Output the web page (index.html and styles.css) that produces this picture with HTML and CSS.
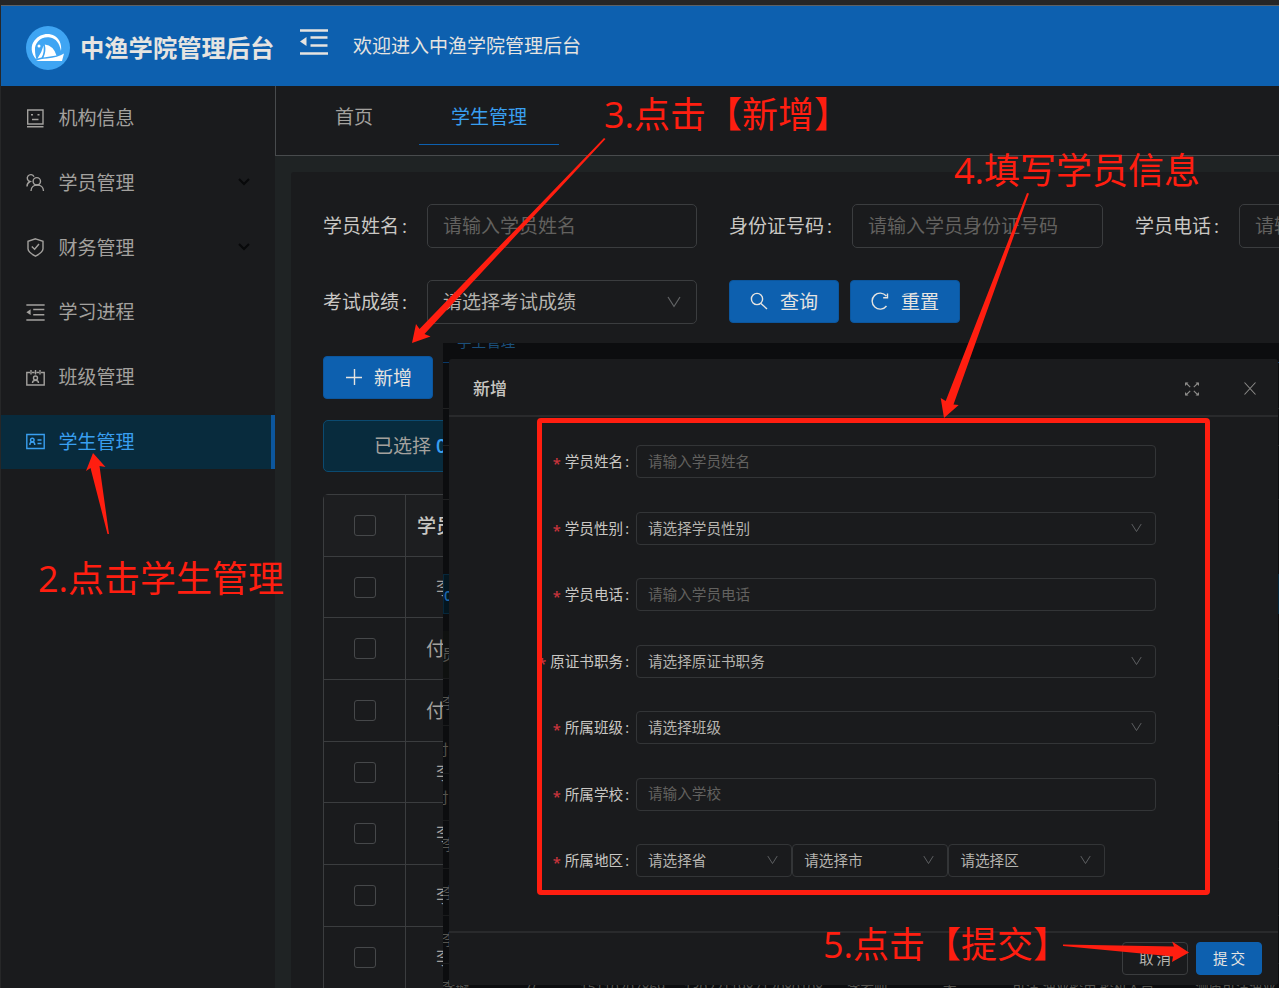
FILE: index.html
```html
<!DOCTYPE html>
<html lang="zh-CN">
<head>
    <meta charset="UTF-8">
    <meta name="viewport" content="width=device-width, initial-scale=1.0">
    <title>中渔学院管理后台</title>
    <link rel="stylesheet" href="styles.css">
</head>
<body>
    <svg class="sprite" width="0" height="0">
        <symbol id="i-down" viewBox="0 0 14 12"><path d="M1 1l6 9.5L13 1" fill="none" stroke="currentColor" stroke-width="1.2"/></symbol>
        <symbol id="i-indent" viewBox="0 0 28 26"><path d="M0 1.5h28M10.5 8.5h17M10.5 16.5h17M0 24.500h28" fill="none" stroke="currentColor" stroke-width="2.3"/><path d="M0 12.5L6.500 8v9z" fill="currentColor" stroke="none"/></symbol>
    </svg>

    <header class="header">
        <div class="logo">
            <svg width="44" height="44" viewBox="0 0 44 44">
                <circle cx="22" cy="22" r="22" fill="#3fa5f3"/>
                <path d="M10.500 33.500C4.500 28 4.500 19 8.500 14.500C16 5 29 6.500 33.500 15C35 18 35.500 22 35 25C33.500 17 30 12.500 24 11.500C15 10 8.500 17 9 24C9 28 9.800 31 10.500 33.500z" fill="#fff"/>
                <path d="M11.500 32.500Q16 26 17.500 19.500Q18.500 27 15.500 31.500z" fill="#fff"/>
                <path d="M17.500 31.500Q20.500 25 18.800 18.500Q27.500 19.500 30.500 29.500z" fill="#fff"/>
                <path d="M10 35Q14 32.600 21 32.400Q32 31.500 38 27.500L36 35z" fill="#fff"/>
                <circle cx="13" cy="20" r="1.500" fill="#fff"/>
            </svg>
            <h1>中渔学院管理后台</h1>
        </div>
        <svg class="fold" width="28" height="26"><use href="#i-indent"/></svg>
        <span class="welcome">欢迎进入中渔学院管理后台</span>
    </header>

    <div class="layout">
        <nav class="sidebar">
            <a class="menu-item">
                <svg width="19" height="19" viewBox="0 0 19 19"><path d="M1.700 1h15.300v14H1.700zM1 17.800h16.500M5 5.800h2M11.500 5.800h2M6 10.500h6.500"/></svg>
                机构信息
            </a>
            <a class="menu-item">
                <svg width="19" height="19" viewBox="0 0 19 19"><circle cx="10.800" cy="8.300" r="3.700"/><path d="M5 18c0-8 12.500-8 12.500 0M8 3.700A3.500 3.500 0 1 0 4 8.500C2 9.500 1 11 1 13.500"/></svg>
                学员管理
                <svg class="arrow" width="12" height="8" viewBox="0 0 12 8"><path d="M1 1l5 5 5-5"/></svg>
            </a>
            <a class="menu-item">
                <svg width="19" height="19" viewBox="0 0 19 19"><path d="M9.500 .8l7.500 2.500v7.500c0 3-4 5.500-7.500 7.400c-3.500-1.900-7.500-4.400-7.500-7.400V3.300zM5.800 8.500L8.600 11.300L13 6"/></svg>
                财务管理
                <svg class="arrow" width="12" height="8" viewBox="0 0 12 8"><path d="M1 1l5 5 5-5"/></svg>
            </a>
            <a class="menu-item">
                <svg width="19" height="17"><use href="#i-indent"/></svg>
                学习进程
            </a>
            <a class="menu-item">
                <svg width="19" height="19" viewBox="0 0 19 19"><path d="M4 4.500H.8V17h17.400V4.500H15M6 4.500h2.500M10.500 4.500H13M5 2v4.500M9.500 2v4.500M14 2v4.500M6.500 15c0-3.500 6-3.500 6 0"/><circle cx="9.500" cy="10" r="2"/></svg>
                班级管理
            </a>
            <a class="menu-item active">
                <svg width="19" height="19" viewBox="0 0 19 19"><path d="M.8 2.500h17.400v14H.8zM3.800 13c0-4 5-4 5 0M11.500 8h4M11.500 11.500h4"/><circle cx="6.300" cy="8" r="1.800"/></svg>
                学生管理
            </a>
        </nav>

        <main class="main">
            <div class="tabs">
                <a class="tab">首页</a>
                <a class="tab active">学生管理</a>
            </div>
            <section class="card">
                <div class="filters">
                    <div class="field">
                        <label>学员姓名<i>:</i></label>
                        <input class="control w-name" placeholder="请输入学员姓名">
                    </div>
                    <div class="field">
                        <label>身份证号码<i>:</i></label>
                        <input class="control w-id" placeholder="请输入学员身份证号码">
                    </div>
                    <div class="field">
                        <label>学员电话<i>:</i></label>
                        <input class="control w-name" placeholder="请输入学员电话">
                    </div>
                </div>
                <div class="filters">
                    <div class="field">
                        <label>考试成绩<i>:</i></label>
                        <div class="control select w-name">请选择考试成绩<svg width="14" height="12"><use href="#i-down"/></svg></div>
                    </div>
                    <div class="buttons">
                        <button class="btn"><svg width="18" height="18" viewBox="0 0 18 18"><circle cx="7" cy="7" r="5.600"/><path d="M11 11.500l6 5.500"/></svg>查询</button>
                        <button class="btn"><svg width="18" height="18" viewBox="0 0 18 18"><path d="M15.500 14A8 8 0 1 1 15.300 4M16.500 1.500v4.300h-4.300"/></svg>重置</button>
                    </div>
                </div>
                <button class="btn btn-add"><svg width="16" height="16" viewBox="0 0 16 16"><path d="M8.500 0v16M0 8.500h16"/></svg>新增</button>
                <div class="selected-tip">已选择 <b>0</b></div>
                <table class="students">
                    <tr><th><span class="check"></span></th><th class="name">学员姓名</th></tr>
                    <tr><td><span class="check"></span></td><td class="name short">李璇</td></tr>
                    <tr><td><span class="check"></span></td><td class="name">付老师</td></tr>
                    <tr><td><span class="check"></span></td><td class="name">付老师</td></tr>
                    <tr><td><span class="check"></span></td><td class="name short">李璇</td></tr>
                    <tr><td><span class="check"></span></td><td class="name short">李璇</td></tr>
                    <tr><td><span class="check"></span></td><td class="name short">李璇</td></tr>
                    <tr><td><span class="check"></span></td><td class="name short">李璇</td></tr>
                </table>
            </section>
        </main>
    </div>

    <div class="overlay">
        <div class="behind">
            <div class="b-tab"><span>学生管理</span></div>
            <div class="b-gap"></div>
            <div class="b-line"></div>
            <div class="b-line b-tall"></div>
            <div class="b-tip">0</div>
            <div class="b-row b-head"><span>员</span></div>
            <div class="b-row"><span>李</span></div>
            <div class="b-row"><span class="l">付</span></div>
            <div class="b-row"><span class="l">付</span></div>
            <div class="b-row"><span>李</span></div>
            <div class="b-row"><span>李</span></div>
            <div class="b-row"><span>李</span></div>
            <div class="b-row b-last">
                <span>李璇</span><span>女</span><span>15110207869</span><span>130221198712080108</span><span>李老师</span><span>无</span><span>可注,渔业船用,船机人员</span><span>测质可注渔业</span>
            </div>
        </div>
        <div class="modal">
            <div class="modal-head">
                <h2>新增</h2>
                <svg class="full" width="14" height="14" viewBox="0 0 14 14"><path d="M1 1l4.200 4.200M13 1L8.800 5.200M1 13l4.200-4.200M13 13L8.800 8.800"/><path d="M0 .5h3.500L0 4zM14 .5V4L10.500 .5zM0 13.500V10l3.500 3.500zM14 13.500h-3.500L14 10z" class="solid"/></svg>
                <svg width="12" height="13" viewBox="0 0 12 13"><path d="M.5 .5l11 12M11.500 .5l-11 12"/></svg>
            </div>
            <form class="modal-body">
                <div class="row"><label><em>*</em>学员姓名<i>:</i></label><input class="ctl" placeholder="请输入学员姓名"></div>
                <div class="row"><label><em>*</em>学员性别<i>:</i></label><div class="ctl select">请选择学员性别<svg width="11" height="10"><use href="#i-down"/></svg></div></div>
                <div class="row"><label><em>*</em>学员电话<i>:</i></label><input class="ctl" placeholder="请输入学员电话"></div>
                <div class="row"><label><em>*</em>原证书职务<i>:</i></label><div class="ctl select">请选择原证书职务<svg width="11" height="10"><use href="#i-down"/></svg></div></div>
                <div class="row"><label><em>*</em>所属班级<i>:</i></label><div class="ctl select">请选择班级<svg width="11" height="10"><use href="#i-down"/></svg></div></div>
                <div class="row"><label><em>*</em>所属学校<i>:</i></label><input class="ctl" placeholder="请输入学校"></div>
                <div class="row"><label><em>*</em>所属地区<i>:</i></label>
                    <div class="ctl select third">请选择省<svg width="11" height="10"><use href="#i-down"/></svg></div>
                    <div class="ctl select third">请选择市<svg width="11" height="10"><use href="#i-down"/></svg></div>
                    <div class="ctl select third">请选择区<svg width="11" height="10"><use href="#i-down"/></svg></div>
                </div>
            </form>
            <div class="modal-foot">
                <button class="mbtn">取消</button>
                <button class="mbtn primary">提交</button>
            </div>
        </div>
    </div>

    <!-- step annotations -->
    <div class="frame"></div>
    <svg class="arrows" width="1279" height="988" viewBox="0 0 1279 988">
        <path d="M107.500 534L90.500 468L86 471L93 453L105.500 467L99.500 466L109 534z"/>
        <path d="M604 138L419.500 329L416 324L412 343L430.500 336.500L424.500 334L605.500 139z"/>
        <path d="M1027 193L945.700 401L940.700 398L944 418L958.700 405L953.500 404.500L1029 193.500z"/>
        <path d="M1063 944.500L1174 946.500L1172 941.500L1189 952.500L1172 962L1173 956.500L1063 946z"/>
    </svg>
    <div class="note note-2">2.点击学生管理</div>
    <div class="note note-3">3.点击【新增】</div>
    <div class="note note-4">4.填写学员信息</div>
    <div class="note note-5">5.点击【提交】</div>
</body>
</html>
```

FILE: styles.css
```css
* {
    box-sizing: border-box;
}
body {
    margin: 0;
    width: 1279px;
    height: 988px;
    overflow: hidden;
    position: relative;
    background: #1a1b1d;
    border-top: 5px solid #262626;
    border-left: 1px solid #262728;
    color: #c9c7c3;
    font-family: "Open Sans", "Noto Sans CJK SC", sans-serif;
    font-size: 19px;
    font-weight: 400;
}
svg {
    display: block;
    flex: none;
    fill: none;
    stroke: currentColor;
    stroke-width: 1.4;
}
.sprite {
    position: absolute;
}
i, em {
    font-style: normal;
}
input, button {
    font: inherit;
    color: inherit;
}
input::placeholder {
    color: #62615f;
    opacity: 1;
}

/* header */
.header {
    height: 81px;
    display: flex;
    align-items: center;
    background: #0d60af;
    border-top: 1px solid #5d6266;
    color: #e6e4e1;
}
.logo {
    display: flex;
    align-items: center;
    gap: 10px;
    width: 299px;
    padding: 3px 0 0 25px;
}
.logo svg {
    stroke: none;
}
.logo h1 {
    margin: 0;
    font-size: 24.3px;
    font-weight: 700;
    line-height: 44px;
    white-space: nowrap;
}
.fold {
    margin-top: -8px;
}
.welcome {
    margin: -2px 0 0 25px;
}

.layout {
    display: flex;
    height: 902px;
}

/* sidebar */
.sidebar {
    width: 274px;
    flex: none;
    padding-top: 5px;
    color: #a3a19e;
}
.menu-item {
    height: 54px;
    margin-bottom: 10.8px;
    padding: 0 0 2px 25px;
    display: flex;
    align-items: center;
    gap: 13.5px;
}
.menu-item svg {
    margin-top: 2px;
}
.menu-item.active {
    background: #082b3d;
    border-right: 4px solid #0c569d;
    color: #399ff0;
}
.menu-item .arrow {
    margin: 0 0 0 90px;
    color: #08090a;
    stroke-width: 2;
}

/* main */
.main {
    flex: 1;
    min-width: 0;
    background: #1f2324;
}
.tabs {
    height: 70px;
    display: flex;
    background: #1a1b1d;
    border-left: 1px solid #484b4d;
    border-bottom: 1px solid #484b4d;
    padding-left: 28px;
}
.tab {
    width: 100px;
    height: 59px;
    line-height: 62px;
    text-align: center;
    color: #a3a19e;
}
.tab.active {
    width: 140px;
    margin-left: 15px;
    color: #399ff0;
    border-bottom: 1px solid #0d60af;
}
.card {
    margin: 16px 0 0 16px;
    height: 816px;
    padding: 32px 0 0 32px;
    background: #1a1b1d;
    border-radius: 3px 0 0 0;
    overflow: hidden;
}
.filters {
    display: flex;
    gap: 32px;
    height: 44px;
    margin-bottom: 32px;
}
.field {
    display: flex;
    flex: none;
    align-items: center;
}
.field label {
    margin-top: -2px;
}
.field label i {
    margin: 0 20px 0 3px;
}
.control {
    height: 44px;
    padding: 0 15px;
    background: none;
    border: 1px solid #3b3d3f;
    border-radius: 5px;
}
.w-name {
    width: 270px;
}
.w-id {
    width: 251px;
}
.select {
    display: flex;
    align-items: center;
    justify-content: space-between;
    padding-bottom: 2px;
    color: #b5b3af;
}
.select svg {
    margin-top: 1px;
    color: #626466;
}
.buttons {
    display: flex;
    gap: 11px;
}
.btn {
    width: 110px;
    height: 43px;
    padding: 0 0 2px;
    display: flex;
    align-items: center;
    justify-content: center;
    gap: 12px;
    color: #e6e4e1;
    background: #0d60af;
    border: 1px solid #0c569d;
    border-radius: 4px;
}
.btn-add {
    margin-bottom: 21px;
    padding-left: 2px;
}
.selected-tip {
    height: 52px;
    line-height: 50px;
    padding-left: 50px;
    color: #a3a19e;
    background: #082b3d;
    border: 1px solid #0b4a70;
    border-radius: 5px;
}
.selected-tip b {
    color: #399ff0;
    font-weight: 600;
}
.students {
    width: 1100px;
    margin-top: 22px;
    border: 1px solid #3b3d3f;
    border-radius: 5px 0 0 0;
    border-spacing: 0;
    table-layout: fixed;
}
.students tr {
    height: 61.7px;
}
.students th, .students td {
    padding: 0 0 1px;
    border-bottom: 1px solid #3b3d3f;
    color: #a3a19e;
}
.students th {
    background: #1d1e20;
    font-weight: 500;
    color: #c9c7c3;
}
.students th:first-child, .students td:first-child {
    width: 82px;
    padding: 0;
    border-right: 1px solid #3b3d3f;
}
.students .name {
    text-align: left;
    padding-left: 11px;
}
.students td.name {
    padding-left: 20px;
}
.students td.short {
    padding-left: 30px;
}
.check {
    display: block;
    width: 22px;
    height: 21px;
    margin: 0 auto;
    border: 1px solid #46484a;
    border-radius: 3px;
}

/* add dialog with its dimmed page */
.overlay {
    position: absolute;
    left: 442px;
    top: 338px;
    width: 836px;
    height: 645px;
    overflow: hidden;
    background: #0c0d0f;
    font-size: 14.6px;
}
.behind {
    color: #55544f;
}
.b-tab {
    height: 20px;
    overflow: hidden;
    padding-left: 14px;
    color: #1b4f7a;
    border-bottom: 1px solid #0a3866;
    line-height: 20px;
}
.b-tab span {
    display: block;
    margin-top: -12px;
}
.b-gap {
    height: 46px;
    border-bottom: 1px solid #202122;
}
.b-line {
    height: 37px;
    border-bottom: 1px solid #202122;
}
.b-tall {
    height: 54px;
    margin-bottom: 74px;
}
.b-tip {
    height: 40px;
    line-height: 40px;
    background: #04161f;
    border: 1px solid #06273b;
    color: #1c64a8;
    font-weight: 600;
    margin-bottom: 17px;
}
.b-row {
    height: 47.5px;
    line-height: 47px;
    border-bottom: 1px solid #1a1b1c;
    white-space: nowrap;
}
.b-row span {
    margin-left: -1px;
}
.b-row .l {
    margin-left: -9px;
}
.b-head {
    background: #0f1110;
}
.b-last {
    display: grid;
    grid-template-columns: 83px 55px 104px 163px 96px 69px 183px 90px;
    font-size: 13.5px;
    line-height: 47px;
}

.modal {
    position: absolute;
    left: 6px;
    top: 16px;
    width: 829px;
    height: 626px;
    display: flex;
    flex-direction: column;
    background: #1a1b1d;
    border-radius: 3px;
}
.modal-head {
    height: 58px;
    display: flex;
    align-items: center;
    padding: 2px 22px 0 24px;
    border-bottom: 2px solid #292a2c;
}
.modal-head h2 {
    flex: 1;
    margin: -2px 0 0;
    font-size: 17px;
    font-weight: 500;
}
.modal-head svg {
    color: #8c8b89;
    stroke-width: 1.1;
}
.modal-head .full {
    margin: 2px 45px 0 0;
}
.modal-head svg .solid {
    fill: currentColor;
    stroke: none;
}
.modal-body {
    height: 514px;
    padding-top: 28px;
}
.row {
    display: flex;
    height: 33px;
    margin-bottom: 33.5px;
    align-items: center;
}
.row label {
    width: 187px;
    margin-top: -2px;
    padding-right: 7px;
    text-align: right;
}
.row label i {
    margin-left: 2px;
}
.row em {
    position: relative;
    top: 2px;
    margin-right: 4px;
    color: #c9343c;
    font-weight: 600;
}
.ctl {
    width: 520px;
    height: 33px;
    padding: 0 13px 2px 11px;
    background: none;
    border: 1px solid #333537;
    border-radius: 4px;
}
.third {
    width: 156.2px;
}
.modal-foot {
    flex: 1;
    display: flex;
    justify-content: flex-end;
    gap: 8px;
    padding: 9px 16px 0 0;
    border-top: 2px solid #292a2c;
}
.mbtn {
    width: 66px;
    height: 33px;
    padding: 0 0 2px;
    letter-spacing: 3px;
    text-indent: 3px;
    color: #b5b3af;
    background: none;
    border: 1px solid #3b3d3f;
    border-radius: 4px;
}
.mbtn.primary {
    color: #e6e4e1;
    background: #0d60af;
    border-color: #0d60af;
}

/* annotations */
.frame {
    position: absolute;
    left: 536px;
    top: 413px;
    width: 673px;
    height: 477px;
    border: 5px solid #ff1e10;
    border-radius: 4px;
}
.arrows {
    position: absolute;
    left: -1px;
    top: -5px;
    fill: #ff1e10;
    stroke: none;
}
.note {
    position: absolute;
    color: #ff1e10;
    font-size: 36px;
    line-height: 50px;
    white-space: nowrap;
}
.note-2 { left: 37px; top: 549px; }
.note-3 { left: 603px; top: 85px; }
.note-4 { left: 953px; top: 141px; }
.note-5 { left: 822px; top: 915px; }
```
